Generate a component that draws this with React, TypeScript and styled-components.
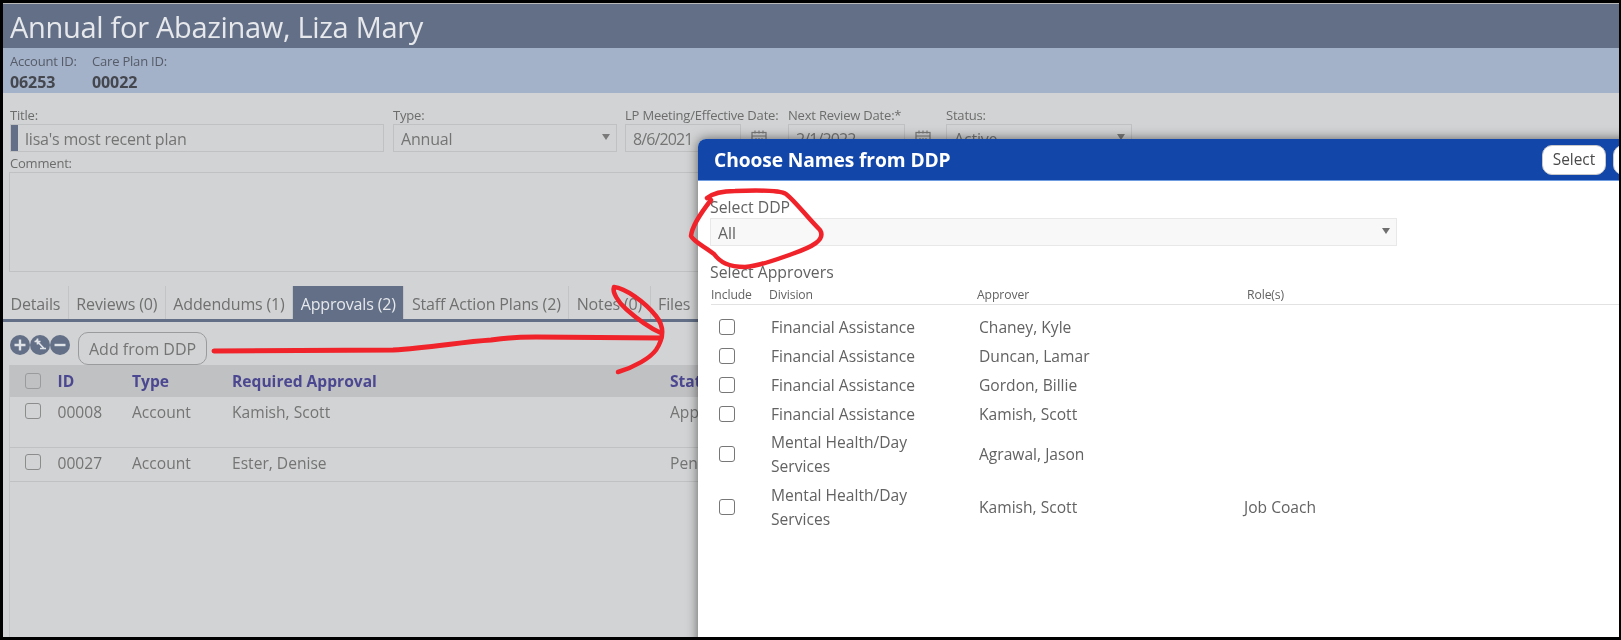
import styled, { createGlobalStyle } from "styled-components";

const GlobalStyle = createGlobalStyle`
  html, body {
    margin: 0;
    height: 640px;
    overflow: hidden;
    background: #000;
  }
  body {
    padding: 3px 2px 3px 3px;
    box-sizing: border-box;
    font-family: "Open Sans", "Noto Sans", sans-serif;
  }
`;

const Frame = styled.div`
  position: relative;
  width: 1616px;
  height: 634px;
  overflow: hidden;
  display: flex;
  flex-direction: column;
  background: #d2d3d4;
  border-top: 1px solid #b9b9b9;
  box-sizing: border-box;
  filter: blur(0.4px);
`;

const TitleBar = styled.div`
  height: 44px;
  flex: none;
  display: flex;
  align-items: center;
  padding: 1px 0 0 7px;
  box-sizing: border-box;
  background: #626f86;
  color: #e6e8ec;
  font-size: 29px;
  letter-spacing: -0.3px;
`;

const InfoBar = styled.div`
  height: 45px;
  flex: none;
  display: flex;
  padding: 5px 7px 0;
  box-sizing: border-box;
  background: #a3b1c9;
`;

const InfoItem = styled.div<{ $width: number }>`
  width: ${({ $width }) => $width}px;
  color: #555c68;
  font-size: 13px;
  line-height: 17px;
  letter-spacing: -0.2px;
`;

const InfoValue = styled.div`
  margin-top: 2px;
  color: #44474d;
  font-size: 16px;
  line-height: 20px;
  font-weight: 700;
  letter-spacing: -0.1px;
`;

const Form = styled.div`
  flex: none;
  padding: 14px 0 0 7px;
`;

const FieldRow = styled.div`
  display: flex;
`;

const Field = styled.div<{ $width: number }>`
  width: ${({ $width }) => $width}px;
  flex: none;
`;

const Label = styled.div`
  height: 17px;
  color: #6c6c6c;
  font-size: 13px;
  line-height: 16px;
  letter-spacing: -0.2px;
  white-space: nowrap;
`;

const CommentLabel = styled(Label)`
  margin-top: 3px;
`;

const Input = styled.div<{ $width: number; $marked?: boolean }>`
  position: relative;
  width: ${({ $width }) => $width}px;
  height: 28px;
  display: flex;
  align-items: center;
  padding: 2px 0 0 ${({ $marked }) => ($marked ? 14 : 7)}px;
  border: 1px solid #c0c1c2;
  box-sizing: border-box;
  color: #747474;
  font-size: 16px;
  letter-spacing: -0.2px;
`;

const DateInput = styled(Input)`
  letter-spacing: -0.9px;
`;

const RequiredMark = styled.span`
  position: absolute;
  left: 0;
  top: 0;
  bottom: 0;
  width: 7px;
  background: #626f86;
`;

const Caret = styled.span<{ $color: string }>`
  position: absolute;
  right: 6px;
  top: 9px;
  border-left: 4.5px solid transparent;
  border-right: 4.5px solid transparent;
  border-top: 6px solid ${({ $color }) => $color};
`;

const DateWrap = styled.div`
  display: flex;
  align-items: center;
  gap: 9px;
`;

const CommentBox = styled.div`
  width: 1600px;
  height: 100px;
  margin-left: -1px;
  border: 1px solid #c0c1c2;
  box-sizing: border-box;
`;

const Tabs = styled.div`
  flex: none;
  display: flex;
  height: 36px;
  margin-top: 14px;
  box-sizing: border-box;
  border-bottom: 3px solid #626f86;
`;

const Tab = styled.div<{ $active?: boolean }>`
  display: flex;
  align-items: center;
  padding: 3px 7.5px 0 7.5px;
  border-right: 1px solid #c3c4c5;
  background: ${({ $active }) => ($active ? "#626f86" : "transparent")};
  color: ${({ $active }) => ($active ? "#e6e8ec" : "#707070")};
  font-size: 16px;
  letter-spacing: -0.15px;
  white-space: nowrap;
`;

const Toolbar = styled.div`
  flex: none;
  height: 43px;
  display: flex;
  align-items: flex-start;
  padding: 10px 0 0 7px;
  box-sizing: border-box;
`;

const RoundIcon = styled.svg`
  width: 20px;
  height: 20px;
  margin-top: 3px;
  display: block;
`;

const AddButton = styled.div`
  height: 31px;
  margin-left: 8px;
  padding: 0 10px;
  display: flex;
  align-items: center;
  border: 1px solid #9a9b9c;
  border-radius: 10px;
  color: #747474;
  font-size: 16px;
`;

const Table = styled.div`
  flex: 1;
  margin-left: 6px;
  border-left: 1px solid #c3c4c5;
`;

const Row = styled.div<{ $height: number; $head?: boolean }>`
  display: grid;
  grid-template-columns: 47.5px 74.5px 100px 438px 1fr;
  height: ${({ $height }) => $height}px;
  align-items: ${({ $head }) => ($head ? "center" : "start")};
  padding-top: ${({ $head }) => ($head ? 0 : 4)}px;
  box-sizing: border-box;
  background: ${({ $head }) => ($head ? "#c0c1c2" : "transparent")};
  border-bottom: ${({ $head }) => ($head ? "none" : "1px solid #c0c1c2")};
  color: ${({ $head }) => ($head ? "#4b4790" : "#747474")};
  font-size: 15.6px;
  font-weight: ${({ $head }) => ($head ? 700 : 400)};
`;

const Check = styled.span<{ $border: string; $offset: number }>`
  display: block;
  width: 16px;
  height: 16px;
  margin: ${({ $offset }) => $offset}px 0 0 15px;
  border: 1px solid ${({ $border }) => $border};
  border-radius: 3px;
  box-sizing: border-box;
`;

const Dialog = styled.div`
  position: absolute;
  left: 695px;
  top: 135px;
  width: 1000px;
  height: 520px;
  background: #fff;
  border-radius: 8px 0 0 0;
  box-shadow: 0 0 12px rgba(0, 0, 0, 0.55);
`;

const DialogHead = styled.div`
  height: 42px;
  display: flex;
  align-items: center;
  padding-left: 16px;
  background: #1246a8;
  border-radius: 8px 0 0 0;
  border-bottom: 1px solid #6f9be0;
  box-sizing: border-box;
`;

const DialogTitle = styled.div`
  width: 828px;
  color: #fff;
  font-size: 19.2px;
  font-weight: 700;
  letter-spacing: -0.1px;
`;

const HeadButton = styled.div`
  height: 30px;
  min-width: 64px;
  margin-right: 7px;
  display: flex;
  align-items: center;
  justify-content: center;
  background: #fff;
  border: 1px solid #c9c9c9;
  border-radius: 10px;
  box-sizing: border-box;
  color: #4a4a4a;
  font-size: 15.4px;
`;

const DialogBody = styled.div`
  padding: 17px 0 0 12px;
  color: #626262;
`;

const SelectLabel = styled.div`
  height: 20px;
  font-size: 15.8px;
  line-height: 18px;
`;

const DdpSelect = styled.div`
  position: relative;
  width: 687px;
  height: 28px;
  display: flex;
  align-items: center;
  padding: 1px 0 0 7px;
  background: #f8f8f8;
  border: 1px solid #e8e8e8;
  box-sizing: border-box;
  font-size: 15.8px;
`;

const ApproversLabel = styled(SelectLabel)`
  margin-top: 17px;
`;

const HeadRow = styled.div`
  display: grid;
  grid-template-columns: 58px 208px 270px 1fr;
  height: 22px;
  margin-left: 1px;
  padding-top: 3px;
  box-sizing: border-box;
  border-bottom: 1px solid #e2e2e2;
  font-size: 12.2px;
  letter-spacing: -0.1px;
`;

const ApproverList = styled.div`
  padding: 7px 0 0 9px;
`;

const ApproverRow = styled.div<{ $height: number }>`
  display: grid;
  grid-template-columns: 52px 208px 265px 1fr;
  align-items: center;
  height: ${({ $height }) => $height}px;
  font-size: 15.6px;
`;

const Division = styled.div`
  width: 175px;
  line-height: 24px;
`;

const DialogCheck = styled(Check)`
  margin: 0;
`;

const Scribble = styled.svg`
  position: absolute;
  left: -3px;
  top: -4px;
  width: 1621px;
  height: 640px;
  pointer-events: none;
`;

const tabs = [
  "Details",
  "Reviews (0)",
  "Addendums (1)",
  "Approvals (2)",
  "Staff Action Plans (2)",
  "Notes (0)",
  "Files",
];

const approvers = [
  { division: "Financial Assistance", name: "Chaney, Kyle", role: "", height: 29 },
  { division: "Financial Assistance", name: "Duncan, Lamar", role: "", height: 29 },
  { division: "Financial Assistance", name: "Gordon, Billie", role: "", height: 29 },
  { division: "Financial Assistance", name: "Kamish, Scott", role: "", height: 29 },
  { division: "Mental Health/Day Services", name: "Agrawal, Jason", role: "", height: 52 },
  { division: "Mental Health/Day Services", name: "Kamish, Scott", role: "Job Coach", height: 54 },
];

const CalendarIcon = () => (
  <svg width="18" height="18" viewBox="0 0 18 18" fill="none" stroke="#7a7a7a" strokeWidth="1.2">
    <rect x="2" y="3.5" width="14" height="12" />
    <path d="M2 7h14M5 1.5v3M9 1.5v3M13 1.5v3M5 10h2M8 10h2M11 10h2M5 13h2M8 13h2M11 13h2" />
  </svg>
);

const PlusIcon = () => (
  <RoundIcon viewBox="0 0 20 20">
    <circle cx="10" cy="10" r="10" fill="#626f86" />
    <path d="M10 4.5v11M4.5 10h11" stroke="#dfe2e7" strokeWidth="2.4" />
  </RoundIcon>
);

const PlusMinusIcon = () => (
  <RoundIcon viewBox="0 0 20 20">
    <circle cx="10" cy="10" r="10" fill="#626f86" />
    <path
      d="M7.5 3.5v6M4.5 6.5h6M10 13.5h6M6 5l8.5 9"
      stroke="#dfe2e7"
      strokeWidth="1.7"
      fill="none"
    />
  </RoundIcon>
);

const MinusIcon = () => (
  <RoundIcon viewBox="0 0 20 20">
    <circle cx="10" cy="10" r="10" fill="#626f86" />
    <path d="M4.5 10h11" stroke="#dfe2e7" strokeWidth="2.4" />
  </RoundIcon>
);

export default function App() {
  return (
    <>
      <GlobalStyle />
      <Frame>
        <TitleBar>Annual for Abazinaw, Liza Mary</TitleBar>
        <InfoBar>
          <InfoItem $width={82}>
            Account ID:
            <InfoValue>06253</InfoValue>
          </InfoItem>
          <InfoItem $width={120}>
            Care Plan ID:
            <InfoValue>00022</InfoValue>
          </InfoItem>
        </InfoBar>

        <Form>
          <FieldRow>
            <Field $width={383}>
              <Label>Title:</Label>
              <Input $width={374} $marked>
                <RequiredMark />
                lisa's most recent plan
              </Input>
            </Field>
            <Field $width={232}>
              <Label>Type:</Label>
              <Input $width={224}>
                Annual
                <Caret $color="#7a7a7a" />
              </Input>
            </Field>
            <Field $width={163}>
              <Label>LP Meeting/Effective Date:</Label>
              <DateWrap>
                <DateInput $width={116}>8/6/2021</DateInput>
                <CalendarIcon />
              </DateWrap>
            </Field>
            <Field $width={158}>
              <Label>Next Review Date:*</Label>
              <DateWrap>
                <DateInput $width={117}>2/1/2022</DateInput>
                <CalendarIcon />
              </DateWrap>
            </Field>
            <Field $width={186}>
              <Label>Status:</Label>
              <Input $width={186}>
                Active
                <Caret $color="#7a7a7a" />
              </Input>
            </Field>
          </FieldRow>
          <CommentLabel>Comment:</CommentLabel>
          <CommentBox />
        </Form>

        <Tabs>
          {tabs.map((tab) => (
            <Tab key={tab} $active={tab.startsWith("Approvals")}>
              {tab}
            </Tab>
          ))}
        </Tabs>

        <Toolbar>
          <PlusIcon />
          <PlusMinusIcon />
          <MinusIcon />
          <AddButton>Add from DDP</AddButton>
        </Toolbar>

        <Table>
          <Row $height={32} $head>
            <Check $border="#9a9b9c" $offset={0} />
            <span>ID</span>
            <span>Type</span>
            <span>Required Approval</span>
            <span>Status</span>
          </Row>
          <Row $height={51}>
            <Check $border="#8c8c8c" $offset={2} />
            <span>00008</span>
            <span>Account</span>
            <span>Kamish, Scott</span>
            <span>Approved</span>
          </Row>
          <Row $height={34}>
            <Check $border="#8c8c8c" $offset={2} />
            <span>00027</span>
            <span>Account</span>
            <span>Ester, Denise</span>
            <span>Pending</span>
          </Row>
        </Table>

        <Dialog>
          <DialogHead>
            <DialogTitle>Choose Names from DDP</DialogTitle>
            <HeadButton>Select</HeadButton>
            <HeadButton />
          </DialogHead>
          <DialogBody>
            <SelectLabel>Select DDP</SelectLabel>
            <DdpSelect>
              All
              <Caret $color="#6f6f6f" />
            </DdpSelect>
            <ApproversLabel>Select Approvers</ApproversLabel>
            <HeadRow>
              <span>Include</span>
              <span>Division</span>
              <span>Approver</span>
              <span>Role(s)</span>
            </HeadRow>
            <ApproverList>
              {approvers.map((a) => (
                <ApproverRow key={a.division + a.name} $height={a.height}>
                  <DialogCheck $border="#777" $offset={0} />
                  <Division>{a.division}</Division>
                  <span>{a.name}</span>
                  <span>{a.role}</span>
                </ApproverRow>
              ))}
            </ApproverList>
          </DialogBody>
        </Dialog>

        <Scribble viewBox="0 0 1621 640" fill="none" stroke="#f0222a" strokeLinecap="round" strokeLinejoin="round">
          <path
            strokeWidth="5"
            d="M214 351 L393 350 C430 348 460 342 491 340 C510 337 530 337 536 337 L661 338"
          />
          <path
            strokeWidth="4.5"
            d="M618 372 C635 367 650 358 656 350 C664 338 664 326 656 316 C645 302 625 288 614 287 C612 292 618 302 626 309 C636 318 650 328 661 333"
          />
          <path
            strokeWidth="4.5"
            d="M707 198 C712 194 720 191 735 191 C760 190 780 190 786 194 C796 202 806 216 820 230 C826 240 812 247 792 254 C775 260 760 266 745 267 C728 267 720 262 714 254 C704 246 694 242 691 236 C692 226 700 214 711 200"
          />
        </Scribble>
      </Frame>
    </>
  );
}
